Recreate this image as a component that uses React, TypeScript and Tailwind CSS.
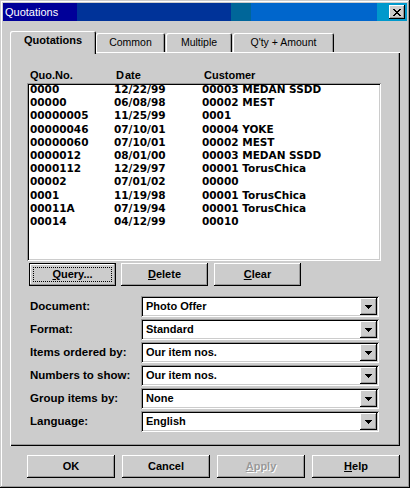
import React from "react";

const raised =
  "shadow-[inset_-1px_-1px_#000,inset_1px_1px_#fff,inset_-2px_-2px_#999,inset_2px_2px_#ccc]";
const sunken =
  "shadow-[inset_1px_1px_#999,inset_-1px_-1px_#fff,inset_2px_2px_#000,inset_-2px_-2px_#ccc]";
const tabShadow = "shadow-[inset_1px_1px_#fff,inset_-1px_0_#000,inset_-2px_0_#999]";
const sans = "font-['Liberation_Sans',Arial,sans-serif]";
const list = "font-['DejaVu_Sans',sans-serif]";

const rows: [string, string, string][] = [
  ["0000", "12/22/99", "00003 MEDAN SSDD"],
  ["00000", "06/08/98", "00002 MEST"],
  ["00000005", "11/25/99", "0001"],
  ["00000046", "07/10/01", "00004 YOKE"],
  ["00000060", "07/10/01", "00002 MEST"],
  ["0000012", "08/01/00", "00003 MEDAN SSDD"],
  ["0000112", "12/29/97", "00001 TorusChica"],
  ["00002", "07/01/02", "00000"],
  ["0001", "11/19/98", "00001 TorusChica"],
  ["00011A", "07/19/94", "00001 TorusChica"],
  ["00014", "04/12/99", "00010"],
];

const fields: [string, string][] = [
  ["Document:", "Photo Offer"],
  ["Format:", "Standard"],
  ["Items ordered by:", "Our item nos."],
  ["Numbers to show:", "Our item nos."],
  ["Group items by:", "None"],
  ["Language:", "English"],
];

function CloseX() {
  const px: [number, number][] = [];
  const pattern = ["XX....XX", ".XX..XX.", "..XXXX..", "...XX...", "..XXXX..", ".XX..XX.", "XX....XX"];
  pattern.forEach((r, y) => r.split("").forEach((c, x) => c === "X" && px.push([x, y])));
  return (
    <svg width="8" height="7" viewBox="0 0 8 7" shapeRendering="crispEdges">
      {px.map(([x, y], i) => (
        <rect key={i} x={x} y={y} width="1" height="1" fill="#000" />
      ))}
    </svg>
  );
}

function Arrow() {
  return (
    <svg width="7" height="4" viewBox="0 0 7 4" shapeRendering="crispEdges">
      <rect x="0" y="0" width="7" height="1" fill="#000" />
      <rect x="1" y="1" width="5" height="1" fill="#000" />
      <rect x="2" y="2" width="3" height="1" fill="#000" />
      <rect x="3" y="3" width="1" height="1" fill="#000" />
    </svg>
  );
}

function Btn({
  children,
  className = "",
  focused = false,
}: {
  children: React.ReactNode;
  className?: string;
  focused?: boolean;
}) {
  return (
    <div
      className={`relative flex items-center justify-center h-[23px] bg-[#cccccc] text-[11px] font-bold text-black ${sans} ${
        focused
          ? "shadow-[inset_0_0_0_1px_#000,inset_-2px_-2px_#999,inset_2px_2px_#fff]"
          : raised
      } ${className}`}
    >
      {focused && <div className="absolute inset-[4px] border border-dotted border-black" />}
      {children}
    </div>
  );
}

export default function App() {
  return (
    <div
      className={`w-[410px] h-[488px] p-[3px] flex flex-col bg-[#cccccc] ${sans} shadow-[inset_-1px_-1px_#000,inset_1px_1px_#ccc,inset_-2px_-2px_#999,inset_2px_2px_#fff]`}
    >
      {/* Title bar */}
      <div className="flex h-[18px] shrink-0">
        <div className="w-[74px] bg-[#000099] flex items-center pl-[2px] text-white text-[11px] leading-none">
          Quotations
        </div>
        <div className="w-[154px] bg-[#003399]" />
        <div className="w-[20px] bg-[#006699]" />
        <div className="w-[126px] bg-[#0066cc]" />
        <div className="w-[30px] bg-[#0099cc] flex items-center pl-[12px]">
          <div className={`w-[16px] h-[14px] bg-[#cccccc] flex items-center justify-center ${raised}`}>
            <CloseX />
          </div>
        </div>
      </div>

      {/* Tabs */}
      <div className="mt-[10px] ml-[7px] w-[390px] flex flex-col">
        <div className="flex items-end h-[21px]">
          <div
            className={`relative z-10 w-[86px] h-[23px] -mb-[2px] bg-[#cccccc] rounded-t-[2px] flex justify-center pt-[3px] text-[11px] font-bold leading-[13px] ${tabShadow}`}
          >
            Quotations
          </div>
          <div
            className={`w-[69px] h-[19px] bg-[#cccccc] rounded-t-[2px] flex justify-center pt-[3px] text-[10.5px] leading-[13px] ${tabShadow}`}
          >
            Common
          </div>
          <div
            className={`ml-[1px] w-[66px] h-[19px] bg-[#cccccc] rounded-t-[2px] flex justify-center pt-[3px] text-[10.5px] leading-[13px] ${tabShadow}`}
          >
            Multiple
          </div>
          <div
            className={`ml-[1px] w-[101px] h-[19px] bg-[#cccccc] rounded-t-[2px] flex justify-center pt-[3px] text-[10.5px] leading-[13px] ${tabShadow}`}
          >
            Q'ty + Amount
          </div>
        </div>

        {/* Panel */}
        <div className="h-[394px] bg-[#cccccc] pl-[17px] pt-[16px] flex flex-col shadow-[inset_1px_1px_#fff,inset_-1px_-1px_#000,inset_-2px_-2px_#999]">
          <div className="h-[15px] w-[354px] grid grid-cols-[86px_88px_1fr] pl-[3px] text-[11px] font-bold leading-[14px]">
            <div>Quo.No.</div>
            <div>
              <span className="mr-[1px]">D</span>ate
            </div>
            <div>Customer</div>
          </div>
          <div className={`w-[354px] h-[178px] bg-white px-[2px] ${sunken}`}>
            {rows.map((r, i) => (
              <div
                key={i}
                className={`grid grid-cols-[84px_88px_1fr] pl-[1px] text-[10.5px] font-bold leading-[13.2px] text-black ${list}`}
              >
                <div>{r[0]}</div>
                <div>{r[1]}</div>
                <div>{r[2]}</div>
              </div>
            ))}
          </div>

          <div className="mt-[2px] flex pl-[2px]">
            <Btn className="w-[87px]" focused>
              <span>
                <span className="underline">Q</span>uery...
              </span>
            </Btn>
            <Btn className="w-[87px] ml-[5px]">
              <span>
                <span className="underline">D</span>elete
              </span>
            </Btn>
            <Btn className="w-[87px] ml-[6px]">
              <span>
                <span className="underline">C</span>lear
              </span>
            </Btn>
          </div>

          <div className="mt-[10px] grid grid-cols-[114px_238px] gap-y-[2px]">
            {fields.map(([label, value], i) => (
              <React.Fragment key={i}>
                <div className="h-[21px] flex items-center pl-[3px] text-[11.5px] font-bold">{label}</div>
                <div className={`h-[21px] bg-white flex items-center pl-[5px] pr-[2px] ${sunken}`}>
                  <span className="flex-1 text-[11px] font-bold">{value}</span>
                  <div
                    className={`w-[17px] h-[17px] bg-[#cccccc] flex items-center justify-center pt-[1px] ${raised}`}
                  >
                    <Arrow />
                  </div>
                </div>
              </React.Fragment>
            ))}
          </div>
        </div>
      </div>

      {/* Bottom buttons */}
      <div className="mt-[9px] pl-[24px] flex gap-[7px]">
        <Btn className="w-[88px]">OK</Btn>
        <Btn className="w-[88px]">Cancel</Btn>
        <Btn className="w-[88px]">
          <span className="text-[#999999] [text-shadow:1px_1px_0_#fff]">
            <span className="underline">A</span>pply
          </span>
        </Btn>
        <Btn className="w-[88px]">
          <span>
            <span className="underline">H</span>elp
          </span>
        </Btn>
      </div>
    </div>
  );
}
